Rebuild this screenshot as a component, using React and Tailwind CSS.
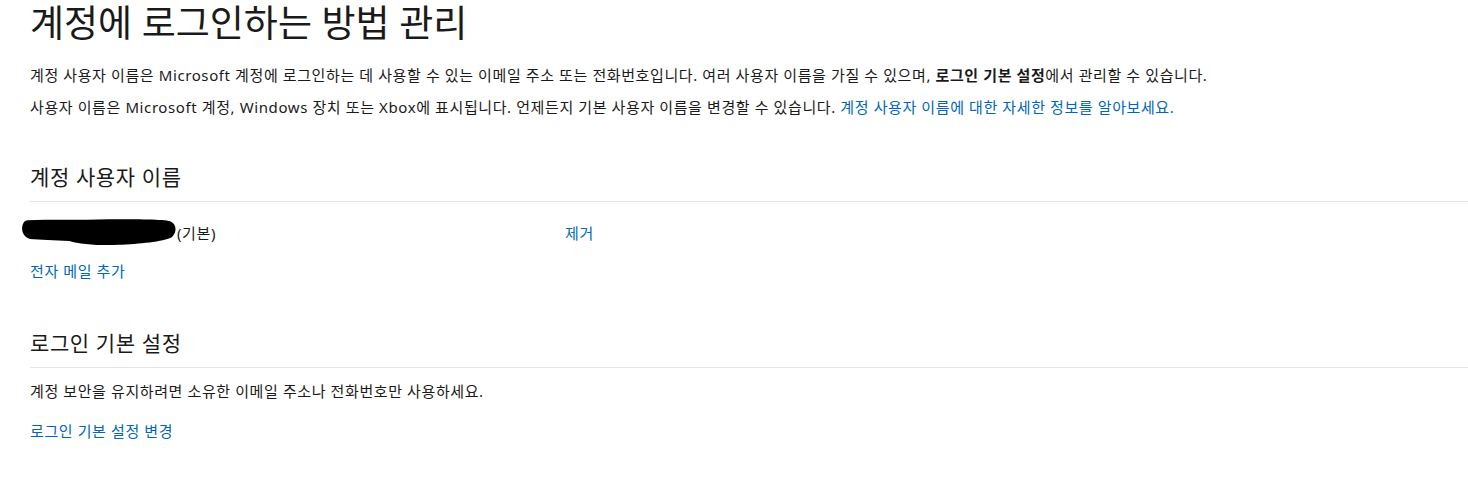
import React from 'react'

const font = { fontFamily: '"Noto Sans", "Noto Sans CJK KR", sans-serif' }

function Redacted() {
  return (
    <svg width="158" height="30" viewBox="0 0 160 30" className="shrink-0" aria-hidden="true">
      <path
        d="M8 2 C30 1 60 2 90 1 C120 1 145 1 152 3 C159 6 159 14 154 19 C145 24 120 26 100 27 C80 28 60 26 50 23 C35 22 20 22 10 21 C2 19 1 10 3 6 C4 3 6 2 8 2 Z"
        fill="#000"
      />
    </svg>
  )
}

function SectionHeading({ children }) {
  return (
    <div className="border-b border-[#e5e5e5] pb-[10px]">
      <h2 className="text-[21px] leading-[28px] text-[#1a1a1a]">{children}</h2>
    </div>
  )
}

export default function App() {
  return (
    <div className="min-h-screen bg-white pl-[30px] text-[#1a1a1a] tracking-[0.6px]" style={font}>
      <h1 className="pt-[1px] text-[37px] leading-[44px] font-normal tracking-normal text-[#1a1a1a]">
        계정에 로그인하는 방법 관리
      </h1>

      <div className="mt-[20px] space-y-[12px] text-[15px] leading-[20px]">
        <p>
          계정 사용자 이름은 Microsoft 계정에 로그인하는 데 사용할 수 있는 이메일 주소 또는 전화번호입니다. 여러 사용자 이름을 가질 수 있으며,{' '}
          <span className="font-bold">로그인 기본 설정</span>에서 관리할 수 있습니다.
        </p>
        <p>
          사용자 이름은 Microsoft 계정, Windows 장치 또는 Xbox에 표시됩니다. 언제든지 기본 사용자 이름을 변경할 수 있습니다.{' '}
          <a href="#" className="text-[#0067b8]">계정 사용자 이름에 대한 자세한 정보를 알아보세요.</a>
        </p>
      </div>

      <section className="mt-[46px]">
        <SectionHeading>계정 사용자 이름</SectionHeading>
        <div className="mt-[16px] flex items-center text-[15px] leading-[20px]">
          <div className="ml-[-10px] flex w-[545px] items-center">
            <Redacted />
            <span className="ml-[-1px]">(기본)</span>
          </div>
          <a href="#" className="text-[#0067b8]">제거</a>
        </div>
        <a href="#" className="mt-[13px] block text-[15px] leading-[20px] text-[#0067b8]">
          전자 메일 추가
        </a>
      </section>

      <section className="mt-[48px]">
        <SectionHeading>로그인 기본 설정</SectionHeading>
        <p className="mt-[13px] text-[15px] leading-[20px]">
          계정 보안을 유지하려면 소유한 이메일 주소나 전화번호만 사용하세요.
        </p>
        <a href="#" className="mt-[20px] block text-[15px] leading-[20px] text-[#0067b8]">
          로그인 기본 설정 변경
        </a>
      </section>
    </div>
  )
}
